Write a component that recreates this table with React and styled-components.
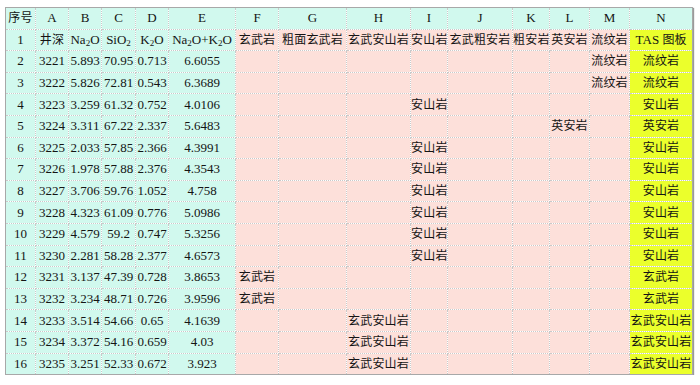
import React from "react";
import styled, { createGlobalStyle } from "styled-components";

const Global = createGlobalStyle`
  html, body { margin: 0; padding: 0; background: #ffffff; }
  body { font-family: "Liberation Serif", "Noto Sans CJK SC", serif; }
`;

const Page = styled.div`
  padding: 7px 0 0 5px;
`;

const Table = styled.table`
  border-collapse: collapse;
  table-layout: fixed;
  width: 687px;
  border: 1px solid #a8a8a8;
  box-shadow: 1px 1px 1px #9a9a9a;
  color: #141414;
  font-size: 13px;
`;

const BG = {
  cyan: "#d1f9ee",
  pink: "#fde0da",
  yellow: "#ebff2c",
};

const Row = styled.tr`
  height: 21.6px;
`;

const Cell = styled.td`
  background: ${(p) => BG[p.$tone || "cyan"]};
  border-right: 1px dotted #c9c9c9;
  border-bottom: 1px dotted #c9c9c9;
  text-align: center;
  vertical-align: middle;
  padding: 0;
  white-space: nowrap;
  overflow: hidden;
  line-height: 20px;
  font-size: ${(p) => (p.$cjk ? "12px" : "13px")};
  letter-spacing: ${(p) => (p.$cjk ? "0.2px" : "0")};
`;

const Sub = styled.sub`
  font-size: 9px;
  vertical-align: -2px;
  line-height: 0;
`;

const widths = [30, 33, 33, 34, 33, 67, 43, 68, 64, 37, 65, 37, 40, 40, 63];
const letters = ["序号", "A", "B", "C", "D", "E", "F", "G", "H", "I", "J", "K", "L", "M", "N"];

const rocks = ["玄武岩", "粗面玄武岩", "玄武安山岩", "安山岩", "玄武粗安岩", "粗安岩", "英安岩", "流纹岩"];

const data = [
  [2, "3221", "5.893", "70.95", "0.713", "6.6055", "流纹岩"],
  [3, "3222", "5.826", "72.81", "0.543", "6.3689", "流纹岩"],
  [4, "3223", "3.259", "61.32", "0.752", "4.0106", "安山岩"],
  [5, "3224", "3.311", "67.22", "2.337", "5.6483", "英安岩"],
  [6, "3225", "2.033", "57.85", "2.366", "4.3991", "安山岩"],
  [7, "3226", "1.978", "57.88", "2.376", "4.3543", "安山岩"],
  [8, "3227", "3.706", "59.76", "1.052", "4.758", "安山岩"],
  [9, "3228", "4.323", "61.09", "0.776", "5.0986", "安山岩"],
  [10, "3229", "4.579", "59.2", "0.747", "5.3256", "安山岩"],
  [11, "3230", "2.281", "58.28", "2.377", "4.6573", "安山岩"],
  [12, "3231", "3.137", "47.39", "0.728", "3.8653", "玄武岩"],
  [13, "3232", "3.234", "48.71", "0.726", "3.9596", "玄武岩"],
  [14, "3233", "3.514", "54.66", "0.65", "4.1639", "玄武安山岩"],
  [15, "3234", "3.372", "54.16", "0.659", "4.03", "玄武安山岩"],
  [16, "3235", "3.251", "52.33", "0.672", "3.923", "玄武安山岩"],
];

export default function App() {
  return (
    <>
      <Global />
      <Page>
        <Table>
          <colgroup>
            {widths.map((w, i) => (
              <col key={i} style={{ width: w }} />
            ))}
          </colgroup>
          <tbody>
            <Row>
              {letters.map((l, i) => (
                <Cell key={i} $cjk={i === 0}>
                  {l}
                </Cell>
              ))}
            </Row>
            <Row>
              <Cell>1</Cell>
              <Cell $cjk>井深</Cell>
              <Cell>
                Na<Sub>2</Sub>O
              </Cell>
              <Cell>
                SiO<Sub>2</Sub>
              </Cell>
              <Cell>
                K<Sub>2</Sub>O
              </Cell>
              <Cell>
                Na<Sub>2</Sub>O+K<Sub>2</Sub>O
              </Cell>
              {rocks.map((r) => (
                <Cell key={r} $tone="pink" $cjk>
                  {r}
                </Cell>
              ))}
              <Cell $tone="yellow">
                TAS <span style={{ fontSize: 12 }}>图板</span>
              </Cell>
            </Row>
            {data.map(([n, a, b, c, d, e, rock]) => (
              <Row key={n}>
                <Cell>{n}</Cell>
                <Cell>{a}</Cell>
                <Cell>{b}</Cell>
                <Cell>{c}</Cell>
                <Cell>{d}</Cell>
                <Cell>{e}</Cell>
                {rocks.map((r) => (
                  <Cell key={r} $tone="pink" $cjk>
                    {r === rock ? rock : ""}
                  </Cell>
                ))}
                <Cell $tone="yellow" $cjk>
                  {rock}
                </Cell>
              </Row>
            ))}
          </tbody>
        </Table>
      </Page>
    </>
  );
}
